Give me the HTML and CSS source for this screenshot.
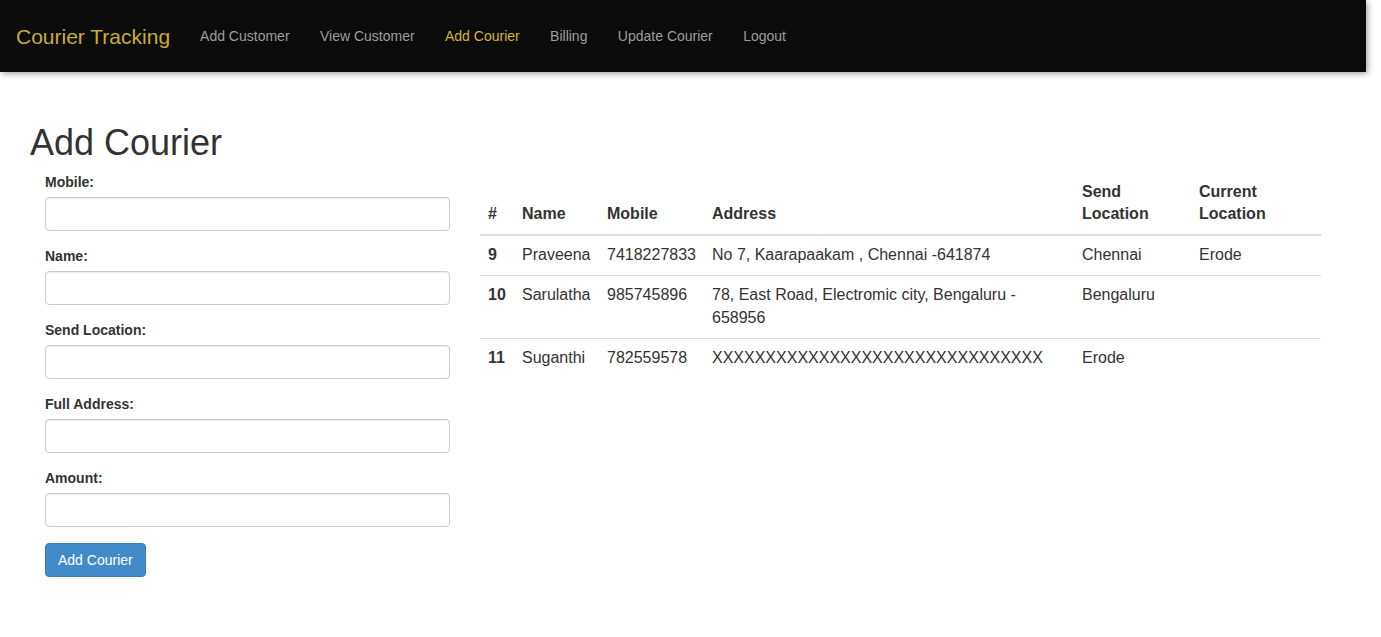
FILE: index.html
```html
<!DOCTYPE html>
<html lang="en">
<head>
<meta charset="utf-8">
<title>Courier Tracking - Add Courier</title>
<link rel="stylesheet" href="styles.css">
</head>
<body>
<nav class="navbar">
  <a class="brand" href="#">Courier Tracking</a>
  <ul class="nav">
    <li><a href="#">Add Customer</a></li>
    <li><a href="#">View Customer</a></li>
    <li><a class="active" href="#">Add Courier</a></li>
    <li><a href="#">Billing</a></li>
    <li><a href="#">Update Courier</a></li>
    <li><a href="#">Logout</a></li>
  </ul>
</nav>
<main class="main">
  <h1 class="title">Add Courier</h1>
  <div class="row">
    <form class="col-form">
      <div class="form-group">
        <label>Mobile:</label>
        <input class="form-control" type="text">
      </div>
      <div class="form-group">
        <label>Name:</label>
        <input class="form-control" type="text">
      </div>
      <div class="form-group">
        <label>Send Location:</label>
        <input class="form-control" type="text">
      </div>
      <div class="form-group">
        <label>Full Address:</label>
        <input class="form-control" type="text">
      </div>
      <div class="form-group">
        <label>Amount:</label>
        <input class="form-control" type="text">
      </div>
      <button class="btn" type="button">Add Courier</button>
    </form>
    <div class="col-table">
      <table class="table">
        <colgroup>
          <col class="c-num"><col class="c-name"><col class="c-mobile"><col class="c-addr"><col class="c-send"><col class="c-cur">
        </colgroup>
        <thead>
          <tr><th>#</th><th>Name</th><th>Mobile</th><th>Address</th><th>Send Location</th><th>Current Location</th></tr>
        </thead>
        <tbody>
          <tr><th>9</th><td>Praveena</td><td>7418227833</td><td>No 7, Kaarapaakam , Chennai -641874</td><td>Chennai</td><td>Erode</td></tr>
          <tr><th>10</th><td>Sarulatha</td><td>985745896</td><td>78, East Road, Electromic city, Bengaluru - 658956</td><td>Bengaluru</td><td></td></tr>
          <tr><th>11</th><td>Suganthi</td><td>782559578</td><td>XXXXXXXXXXXXXXXXXXXXXXXXXXXXXXX</td><td>Erode</td><td></td></tr>
        </tbody>
      </table>
    </div>
  </div>
</main>
</body>
</html>
```
FILE: styles.css
```css
* { box-sizing: border-box; }
html, body { margin: 0; padding: 0; background: #fff; }
body {
  font-family: "Liberation Sans", Arial, Helvetica, sans-serif;
  font-size: 14px;
  line-height: 1.42857;
  color: #333;
}
a { text-decoration: none; }

.navbar {
  width: 1366px;
  height: 72px;
  background: #0b0b0b;
  display: flex;
  align-items: center;
  box-shadow: 2px 2px 6px rgba(0, 0, 0, 0.35);
}
.brand {
  margin-left: 16px;
  margin-right: 15px;
  font-size: 21px;
  line-height: 24px;
  color: #c9ab36;
  padding-top: 2px;
}
.nav {
  list-style: none;
  margin: 0;
  padding: 0;
  display: flex;
}
.nav a {
  display: block;
  padding: 0 15px;
  font-size: 14px;
  line-height: 20px;
  color: #9d9d9d;
}
.nav li + li a { margin-left: 0.4px; }
.nav a.active { color: #d6b52c; }

.main {
  width: 1306px;
  margin-left: 30px;
  padding-top: 31px;
}
.title {
  margin: 20px 0 10px;
  font-size: 36px;
  font-weight: 500;
  line-height: 1.1;
  color: #333;
}
.row { display: flex; }
.col-form { width: 435px; padding: 0 15px; margin: 0; }
.col-table { width: 871px; padding: 0 15px; }

.form-group { margin-bottom: 16px; }
.form-group label {
  display: inline-block;
  margin-bottom: 4px;
  font-weight: bold;
  font-size: 14px;
}
.form-control {
  display: block;
  width: 100%;
  height: 34px;
  padding: 6px 12px;
  font: inherit;
  border: 1px solid #ccc;
  border-radius: 4px;
  background: #fff;
  box-shadow: inset 0 1px 1px rgba(0, 0, 0, 0.075);
}
.btn {
  display: inline-block;
  height: 34px;
  padding: 6px 12px;
  font-family: inherit;
  font-size: 14px;
  line-height: 20px;
  color: #fff;
  background: #428bca;
  border: 1px solid #357ebd;
  border-radius: 4px;
}

.table {
  width: 100%;
  border-collapse: collapse;
  table-layout: fixed;
  font-size: 16px;
  line-height: 1.42857;
}
.c-num { width: 34px; }
.c-name { width: 85px; }
.c-mobile { width: 105px; }
.c-addr { width: 370px; }
.c-send { width: 117px; }
.c-cur { width: 130px; }
.table th, .table td {
  padding: 8px;
  text-align: left;
  vertical-align: top;
}
.table th { font-weight: bold; }
.table thead th {
  vertical-align: bottom;
  border-bottom: 2px solid #ddd;
}
.table tbody tr + tr th, .table tbody tr + tr td { border-top: 1px solid #ddd; }
```
